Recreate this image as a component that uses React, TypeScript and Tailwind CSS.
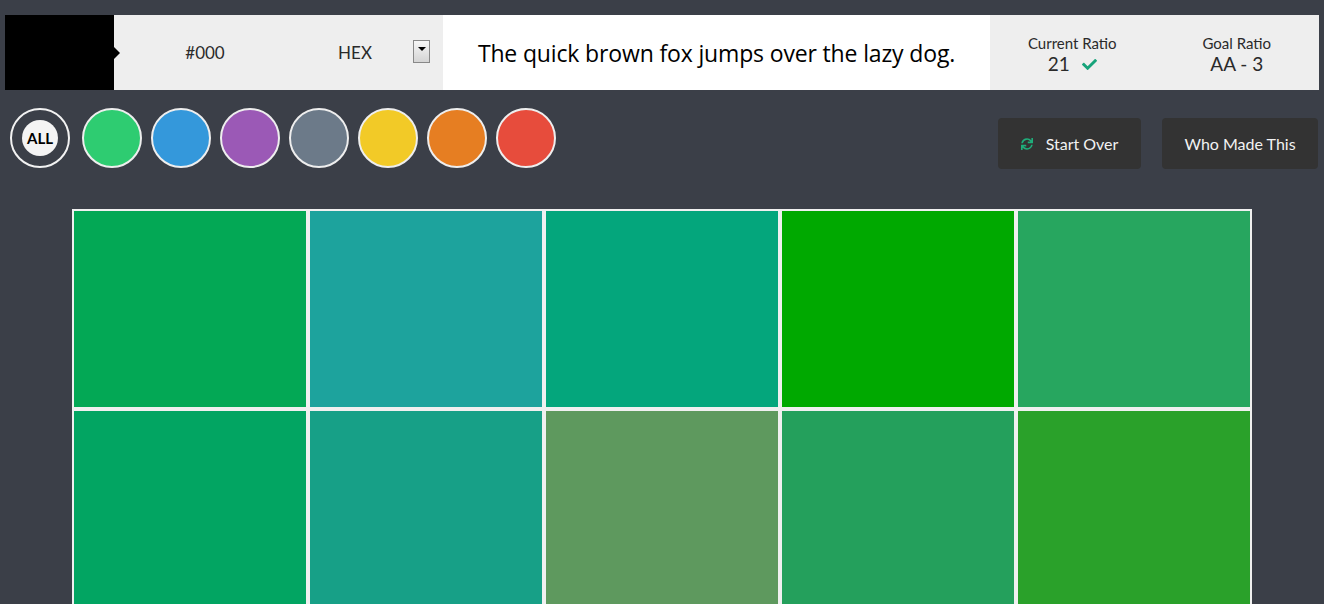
import { FaCheck, FaSync } from "react-icons/fa";

const swatches = ["#2ecc71", "#3498db", "#9b59b6", "#6c7a89", "#f2ca27", "#e67e22", "#e74c3c"];

const cells = [
  "#03a855",
  "#1da39d",
  "#04a67c",
  "#00a900",
  "#27a65f",
  "#02a562",
  "#17a087",
  "#5e995e",
  "#24a05c",
  "#2aa12a",
];

function TopBar() {
  return (
    <div className="mx-[5px] mt-[15px] flex h-[75px] font-['Lato',sans-serif] text-[#2a2a2a]">
      <div className="relative z-10 w-[109px] bg-black">
        <span className="absolute right-[-6px] top-[32px] h-0 w-0 border-y-[6px] border-l-[6px] border-y-transparent border-l-black" />
      </div>
      <div className="relative flex w-[329px] items-center bg-[#eeeeee]">
        <span className="absolute left-[91px] -translate-x-1/2 text-[17px]">#000</span>
        <span className="absolute left-[241px] -translate-x-1/2 text-[17px]">HEX</span>
        <div className="absolute left-[299px] top-[25px] flex h-[23px] w-[17px] justify-center border border-[#888] bg-gradient-to-b from-[#f6f6f6] to-[#d4d4d4] pt-[6px]">
          <span className="h-0 w-0 border-x-[4px] border-t-[4px] border-x-transparent border-t-black" />
        </div>
      </div>
      <div className="flex flex-1 items-center justify-center bg-white pt-[2px]">
        <p className="font-['Open_Sans',sans-serif] text-[23px] tracking-[-0.15px] text-black">
          The quick brown fox jumps over the lazy dog.
        </p>
      </div>
      <div className="grid w-[329px] grid-cols-2 bg-[#eeeeee] pt-[19px] text-center">
        <div>
          <p className="text-[15px] leading-[18px]">Current Ratio</p>
          <p className="flex items-center justify-center gap-[12px] text-[19px] leading-[24px]">
            21 <FaCheck className="text-[15px] text-[#16a37a]" />
          </p>
        </div>
        <div>
          <p className="text-[15px] leading-[18px]">Goal Ratio</p>
          <p className="text-[19px] leading-[24px]">AA - 3</p>
        </div>
      </div>
    </div>
  );
}

function Filters() {
  return (
    <div className="mt-[18px] flex items-start justify-between pl-[10px] pr-[6px]">
      <div className="flex gap-[9px]">
        <button className="mr-[3px] flex h-[60px] w-[60px] items-center justify-center rounded-full border-2 border-[#f2f2f2]">
          <span className="flex h-[36px] w-[36px] items-center justify-center rounded-full bg-[#f4f4f4] font-['Lato',sans-serif] text-[15px] font-bold text-black">
            ALL
          </span>
        </button>
        {swatches.map((c) => (
          <button
            key={c}
            className="h-[60px] w-[60px] rounded-full border-2 border-[#eeeeee]"
            style={{ backgroundColor: c }}
          />
        ))}
      </div>
      <div className="mt-[10px] flex gap-[21px] font-['Lato',sans-serif] text-[16px] text-[#f2f2f2]">
        <button className="flex h-[51px] w-[143px] items-center justify-center gap-[13px] rounded-[4px] bg-[#333333]">
          <FaSync className="text-[12px] text-[#1fae7b]" />
          Start Over
        </button>
        <button className="flex h-[51px] w-[156px] items-center justify-center rounded-[4px] bg-[#333333]">
          Who Made This
        </button>
      </div>
    </div>
  );
}

export default function App() {
  return (
    <div className="h-[604px] w-full overflow-hidden bg-[#3b3f48]">
      <TopBar />
      <Filters />
      <div className="mx-auto mt-[40px] grid w-[1180px] grid-cols-5 gap-[4px] bg-[#f0f0f0] p-[2px]">
        {cells.map((c, i) => (
          <div key={i} className="h-[196px]" style={{ backgroundColor: c }} />
        ))}
      </div>
    </div>
  );
}
